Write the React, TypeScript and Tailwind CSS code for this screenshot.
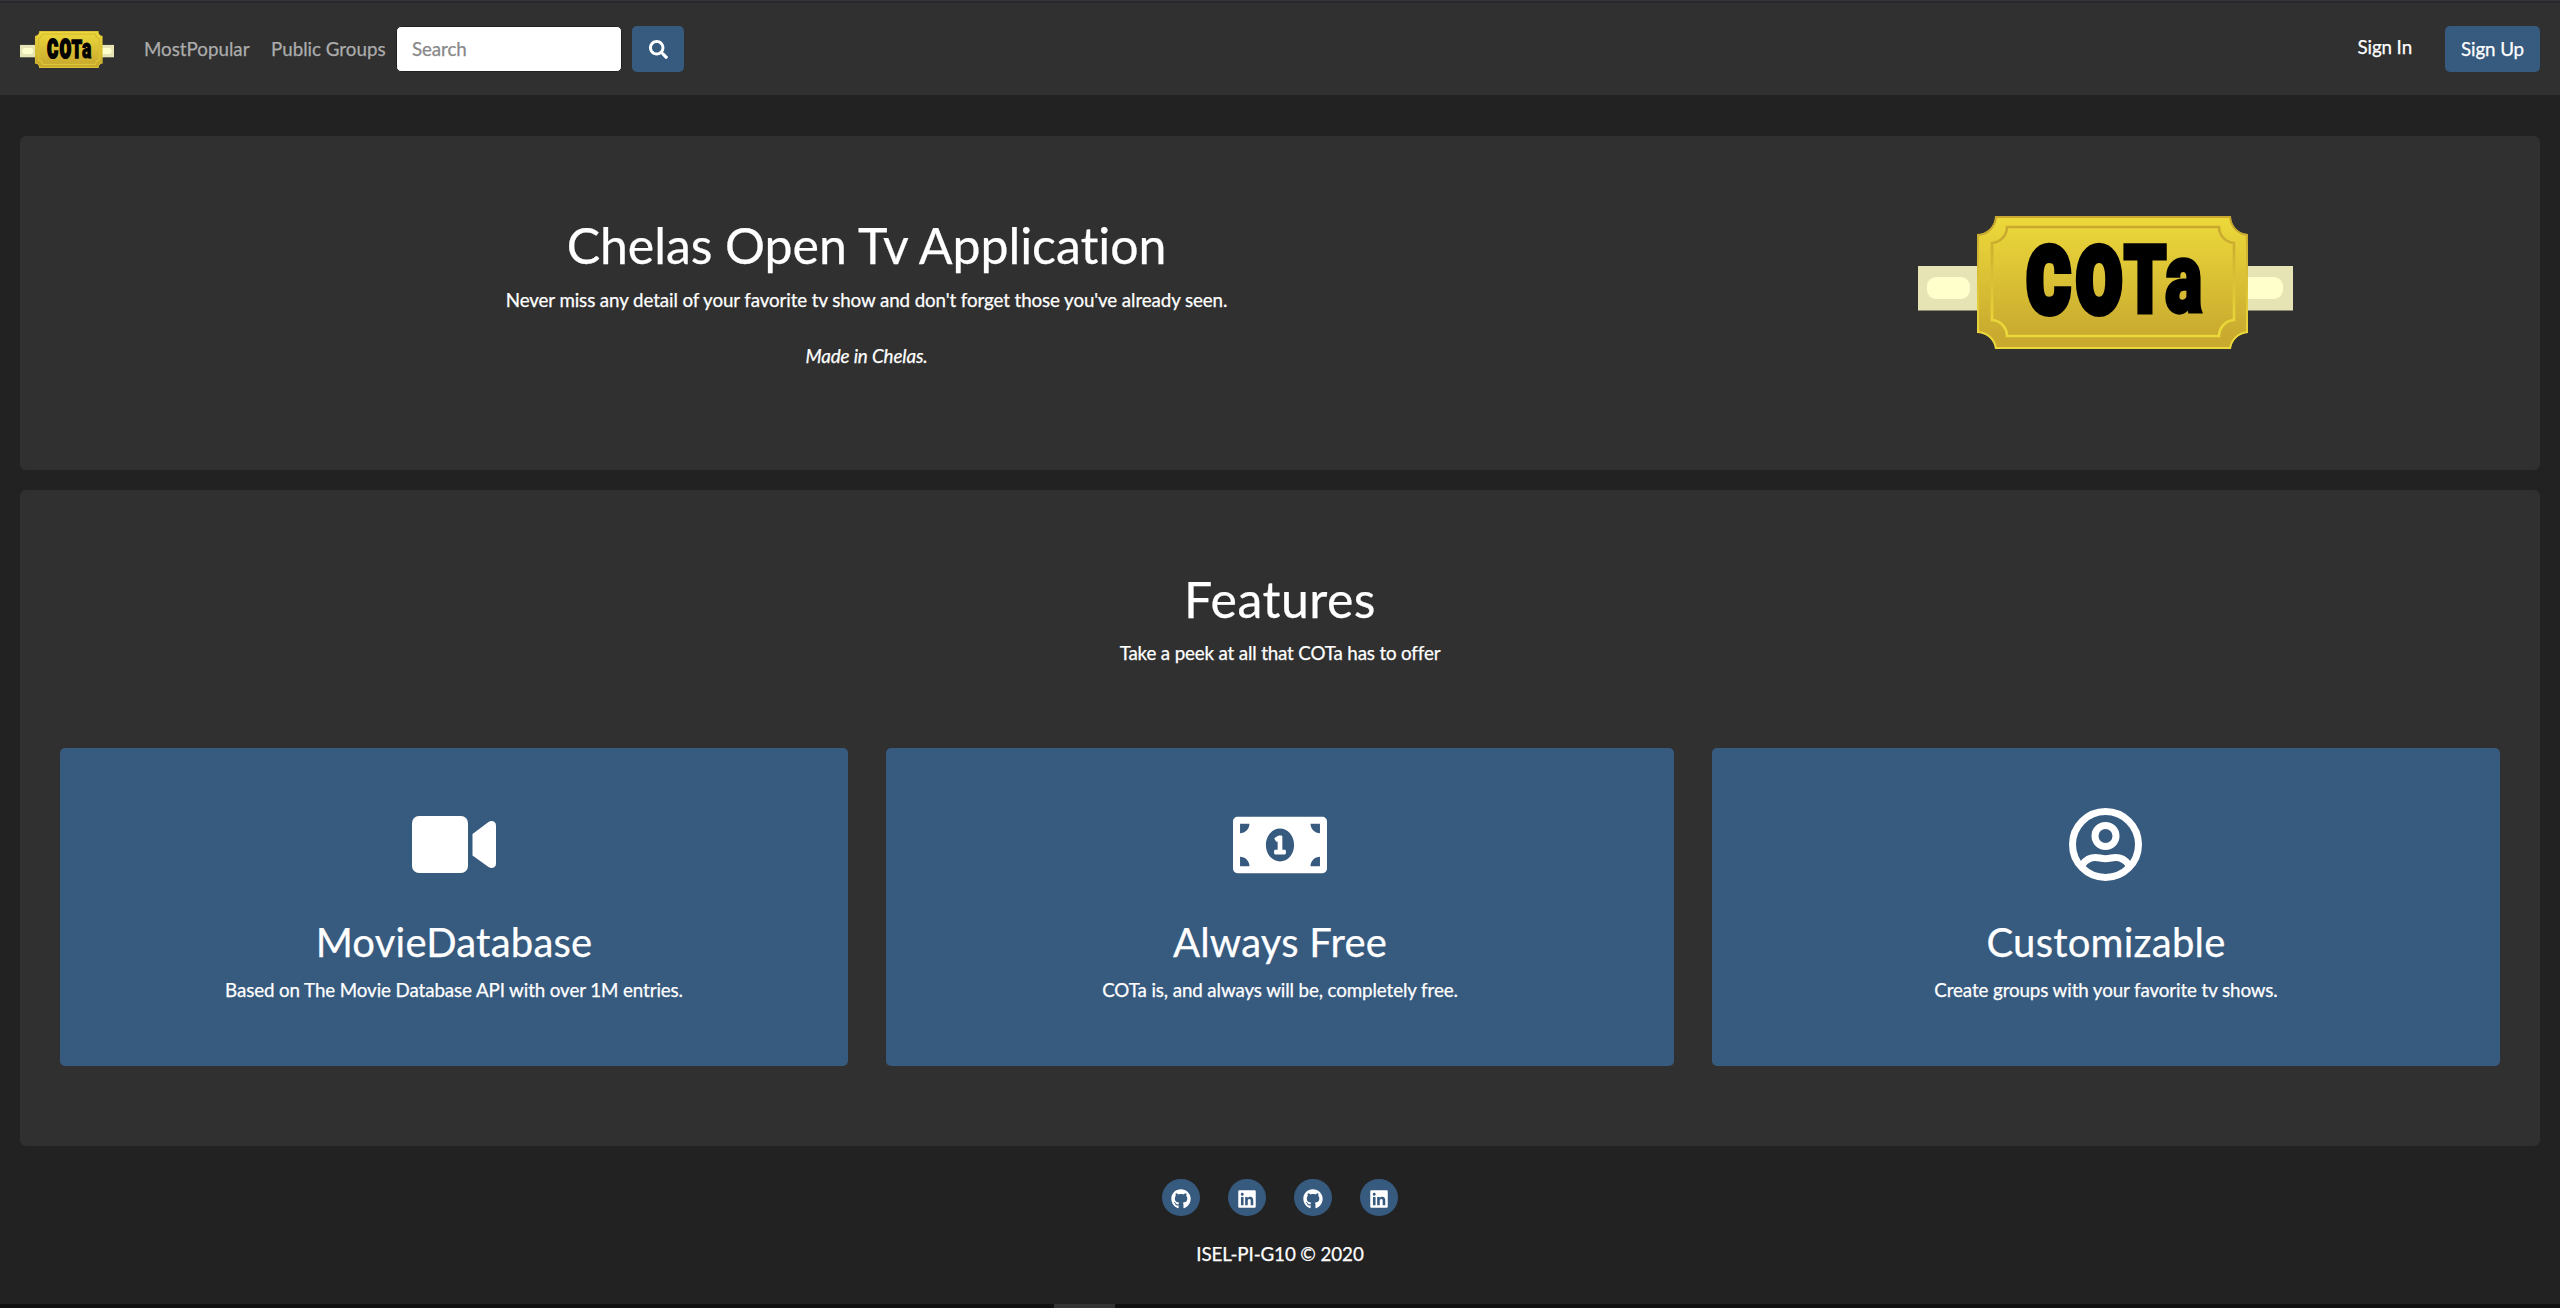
import { FaSearch, FaMoneyBillAlt, FaGithub, FaLinkedin } from "react-icons/fa";
import { useId, type ReactNode } from "react";

const TICKET =
  "M77 0 H313 A18 18 0 0 0 330 18 V117 A18 18 0 0 0 313 133 H77 A18 18 0 0 0 59 117 V18 A18 18 0 0 0 77 0 Z";
const INNER =
  "M89 11 H301 A16 16 0 0 0 316 27 V104 A16 16 0 0 0 301 120 H89 A16 16 0 0 0 74 104 V27 A16 16 0 0 0 89 11 Z";

function Logo({ className }: { className: string }) {
  const id = useId().replace(/[^a-zA-Z0-9]/g, "");
  return (
    <svg viewBox="0 0 375 133" className={className} preserveAspectRatio="none">
      <defs>
        <linearGradient id={`f${id}`} x1="0" y1="0" x2="0" y2="1">
          <stop offset="0.03" stopColor="#ecd83a" />
          <stop offset="0.9" stopColor="#c9aa2f" />
        </linearGradient>
        <linearGradient id={`s${id}`} x1="0" y1="0" x2="0" y2="1">
          <stop offset="0.1" stopColor="#c9aa2f" />
          <stop offset="0.9" stopColor="#ebd83a" />
        </linearGradient>
        <clipPath id={`c${id}`}>
          <path d={TICKET} />
        </clipPath>
      </defs>
      <rect x="0" y="50" width="375" height="44.5" fill="#e6e3b5" />
      <rect x="9" y="61" width="43" height="22" rx="9" fill="#ffffcc" />
      <rect x="322" y="61" width="43" height="22" rx="9" fill="#ffffcc" />
      <path d={TICKET} fill={`url(#f${id})`} stroke={`url(#s${id})`} strokeWidth="4" clipPath={`url(#c${id})`} />
      <path d={INNER} fill="none" stroke={`url(#s${id})`} strokeWidth="2.6" />
      <text
        transform="translate(108 95.5) scale(0.72 1)"
        fontFamily="Roboto, sans-serif"
        fontWeight="900"
        fontSize="91"
        stroke="#000"
        strokeWidth="8"
        x="1.5 70 136 193"
      >
        CO
        <tspan fontSize="93" strokeWidth="5">T</tspan>
        <tspan fontSize="98" strokeWidth="3.5">a</tspan>
      </text>
    </svg>
  );
}

function UserIcon() {
  return (
    <svg viewBox="0 0 73 73" className="mr-[2px] size-[73px]" fill="none" stroke="#fff" strokeWidth="7">
      <circle cx="36.5" cy="36.5" r="33" />
      <circle cx="36.5" cy="28" r="10.5" />
      <path d="M13.5 56.5 C17 51.5 22 49.5 26.5 49.5 C30 49.5 32 50.7 36.5 50.7 C41 50.7 43 49.5 46.5 49.5 C51 49.5 56 51.5 59.5 56.5" />
    </svg>
  );
}

function CameraIcon() {
  return (
    <svg viewBox="0 0 84 57" className="h-[57px] w-[84px]" fill="#fff">
      <rect x="0" y="0" width="56" height="57" rx="7" />
      <path d="M60.5 18 L76.5 6 C80 3.8 84 5.5 84 9.5 V47.5 C84 51.5 80 53.2 76.5 51 L60.5 39.5 Z" />
    </svg>
  );
}

function Card({ icon, title, text }: { icon: ReactNode; title: string; text: string }) {
  return (
    <div className="flex h-[318px] w-[788px] flex-col items-center rounded-[5px] bg-[#375a7f]">
      <div className="mt-[60px] flex h-[73px] items-center justify-center">{icon}</div>
      <h2 className="mt-[37px] text-[40px] leading-[48px] tracking-[0.22px]">{title}</h2>
      <p className="mt-[10px]">{text}</p>
    </div>
  );
}

export default function App() {
  return (
    <div className="flex h-[1308px] w-[2560px] flex-col overflow-hidden bg-[#222] font-['Lato',sans-serif] text-[18.75px] leading-[28px] tracking-[-0.1px] text-white [-webkit-text-stroke:0.25px] [font-variant-ligatures:none]">
      <div className="h-px shrink-0 bg-[#35363a]" />
      <div className="h-[2px] shrink-0 bg-[#27282a]" />
      <nav className="flex h-[92px] shrink-0 items-center bg-[#303030] px-5">
        <Logo className="h-[37px] w-[94px]" />
        <div className="ml-[30px] flex tracking-normal text-[#acacac]">
          <a className="w-[127px]">MostPopular</a>
          <a className="w-[125px] whitespace-nowrap">Public Groups</a>
        </div>
        <div className="flex h-[46px] w-[226px] items-center rounded-[5px] border border-[#222] bg-white px-[15px] text-[#888]">
          Search
        </div>
        <button className="ml-[10px] flex h-[46px] w-[52px] items-center justify-center rounded-[5px] bg-[#375a7f]">
          <FaSearch size={19} />
        </button>
        <a className="mr-[33px] mb-[4px] ml-auto">Sign In</a>
        <button className="h-[46px] w-[95px] rounded-[5px] bg-[#375a7f]">Sign Up</button>
      </nav>
      <section className="mx-5 mt-[41px] flex h-[334px] shrink-0 rounded-[6px] bg-[#303030]">
        <div className="ml-10 flex w-[1613px] flex-col items-center pt-[79px]">
          <h1 className="text-[50px] leading-[60px] tracking-[-0.05px]">Chelas Open Tv Application</h1>
          <p className="mt-[11px]">Never miss any detail of your favorite tv show and don't forget those you've already seen.</p>
          <p className="mt-[28px] italic">Made in Chelas.</p>
        </div>
        <div className="flex w-[867px] justify-center pt-[80px] pr-[2px]">
          <Logo className="h-[133px] w-[375px]" />
        </div>
      </section>
      <section className="mx-5 mt-5 flex h-[656px] shrink-0 flex-col items-center rounded-[6px] bg-[#303030] pt-[79px]">
        <h1 className="text-[50px] leading-[60px] tracking-[0.5px]">Features</h1>
        <p className="mt-[10px] tracking-[-0.15px]">Take a peek at all that COTa has to offer</p>
        <div className="mt-[81px] flex gap-[38px]">
          <Card icon={<CameraIcon />} title="MovieDatabase" text="Based on The Movie Database API with over 1M entries." />
          <Card icon={<FaMoneyBillAlt size={94} />} title="Always Free" text="COTa is, and always will be, completely free." />
          <Card icon={<UserIcon />} title="Customizable" text="Create groups with your favorite tv shows." />
        </div>
      </section>
      <footer className="flex flex-1 flex-col items-center pt-[33px]">
        <div className="flex gap-[28px]">
          {[FaGithub, FaLinkedin, FaGithub, FaLinkedin].map((Icon, i) => (
            <a key={i} className="flex h-[37px] w-[38px] items-center justify-center rounded-full bg-[#375a7f] pt-[2px]">
              <Icon size={20} />
            </a>
          ))}
        </div>
        <p className="mt-[24px]">ISEL-PI-G10 © 2020</p>
      </footer>
      <div className="h-[4px] shrink-0 bg-[#111] pl-[1054px]">
        <div className="h-full w-[61px] bg-[#333]" />
      </div>
    </div>
  );
}
